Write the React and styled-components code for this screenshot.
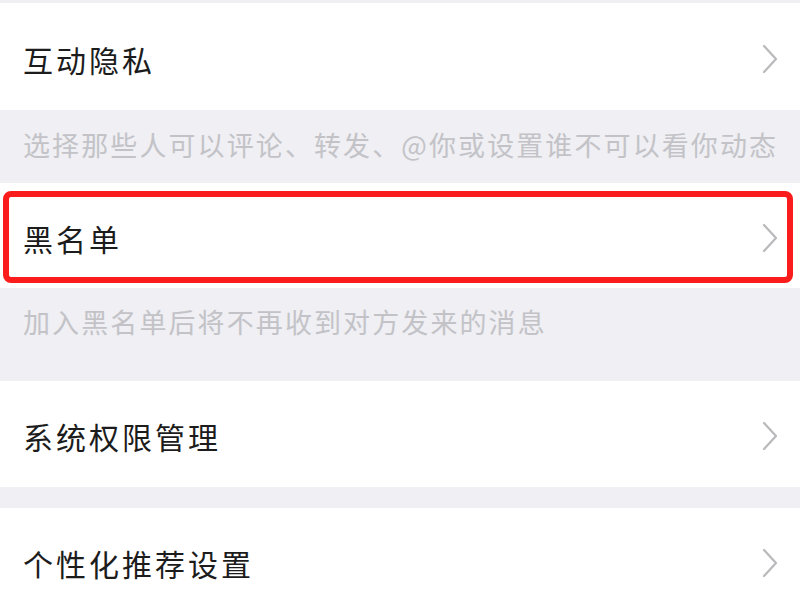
import React from "react";
import styled, { createGlobalStyle } from "styled-components";

const Global = createGlobalStyle`
  html, body {
    margin: 0;
    padding: 0;
    background: #efeff4;
    font-family: "Noto Sans CJK SC", "Noto Sans", sans-serif;
  }
`;

const Page = styled.div`
  width: 800px;
  height: 600px;
  overflow: hidden;
  background: #efeff4;
  padding-top: 3px;
  box-sizing: border-box;
`;

const Row = styled.div`
  position: relative;
  height: ${(p) => p.h}px;
  background: #ffffff;
  display: flex;
  align-items: center;
  justify-content: space-between;
  padding: 4px 22px 0 23px;
  box-sizing: border-box;
`;

const Title = styled.span`
  font-size: 30px;
  letter-spacing: 3px;
  color: #1c1c1c;
  line-height: 40px;
`;

const Hint = styled.div`
  height: ${(p) => p.h}px;
  box-sizing: border-box;
  padding: ${(p) => p.top}px 23px 0 23px;
  font-size: 27px;
  letter-spacing: 2.1px;
  line-height: 36px;
  color: #c3c3c7;
  white-space: nowrap;
`;

const Gap = styled.div`
  height: ${(p) => p.h}px;
`;

const Highlight = styled.div`
  position: absolute;
  left: 3px;
  right: 7px;
  top: 8px;
  bottom: 5px;
  border: 6px solid #fb1c1c;
  border-radius: 8px;
  pointer-events: none;
`;

const Chevron = () => (
  <svg width="16" height="30" viewBox="0 0 16 30" fill="none">
    <path d="M2 2 L14 15 L2 28" stroke="#b9b9bc" strokeWidth="2.2" strokeLinecap="round" strokeLinejoin="round" />
  </svg>
);

const Item = ({ label, h, marked }) => (
  <Row h={h}>
    <Title>{label}</Title>
    <Chevron />
    {marked && <Highlight />}
  </Row>
);

export default function App() {
  return (
    <>
      <Global />
      <Page>
        <Item label="互动隐私" h={107} />
        <Hint h={73} top={17}>选择那些人可以评论、转发、@你或设置谁不可以看你动态</Hint>
        <Item label="黑名单" h={105} marked />
        <Hint h={93} top={16}>加入黑名单后将不再收到对方发来的消息</Hint>
        <Item label="系统权限管理" h={106} />
        <Gap h={21} />
        <Item label="个性化推荐设置" h={106} />
      </Page>
    </>
  );
}
